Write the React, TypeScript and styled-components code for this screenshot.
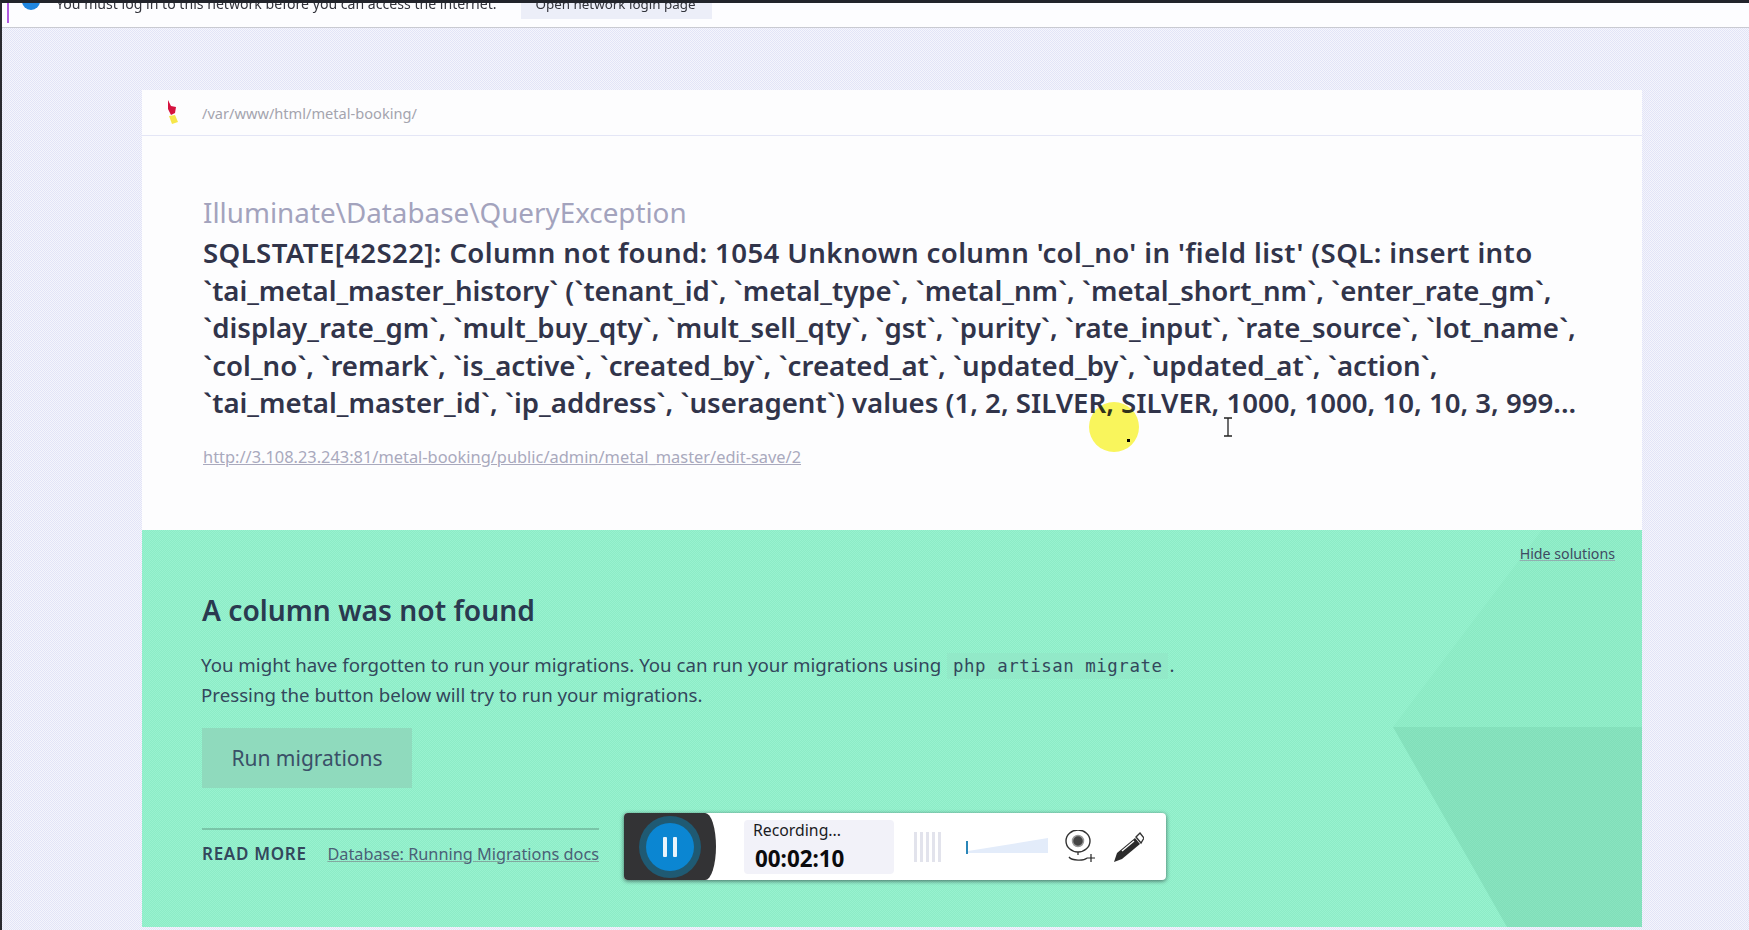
import React from "react";
import styled, { createGlobalStyle } from "styled-components";

const Global = createGlobalStyle`
  html, body { margin: 0; padding: 0; height: 100%; overflow: hidden; }
  body { font-family: "Noto Sans", "Open Sans", "Liberation Sans", sans-serif; }
  * { box-sizing: border-box; }
`;

const Page = styled.div`
  position: relative;
  width: 1749px;
  height: 930px;
  overflow: hidden;
  display: flex;
  flex-direction: column;
  border-top: 3px solid #22242b;
  border-left: 2px solid #2a2a30;
  background: repeating-conic-gradient(#e2e4f7 0 25%, #f5f5fc 0 50%) 0 0 / 2px 2px;
`;

const Notice = styled.div`
  height: 25px;
  flex: none;
  background: #fdfdff;
  border-bottom: 1px solid #c9cad2;
  overflow: hidden;
  position: relative;
  display: flex;
  align-items: flex-start;
  padding-left: 5px;
`;

const NoticeMark = styled.span`
  width: 2px;
  height: 20px;
  background: #b25be0;
  flex: none;
`;

const NoticeDot = styled.span`
  width: 18px;
  height: 18px;
  margin: -11px 0 0 13px;
  border-radius: 50%;
  background: #1f86e0;
  flex: none;
`;

const NoticeText = styled.span`
  margin: -9px 0 0 16px;
  font-size: 14.1px;
  line-height: 20px;
  color: #33343c;
  white-space: nowrap;
`;

const NoticeButton = styled.span`
  margin: -9px 0 0 24px;
  padding: 0 16px 4px 15px;
  height: 25px;
  line-height: 20px;
  font-size: 13.4px;
  color: #33343c;
  background: #eceef8;
  white-space: nowrap;
`;

const Card = styled.main`
  width: 1500px;
  height: 837px;
  flex: none;
  margin: 62px 0 0 140px;
  display: flex;
  flex-direction: column;
  background: #fdfdfe;
`;

const CardHeader = styled.header`
  height: 46px;
  flex: none;
  display: flex;
  align-items: center;
  gap: 21px;
  padding: 1px 0 0 21px;
  border-bottom: 1px solid #e4e6f6;
`;

const Logo = styled.svg`
  width: 18px;
  height: 28px;
  flex: none;
`;

const PathText = styled.span`
  font-size: 14.6px;
  color: #a4a4ae;
`;

const ErrorBlock = styled.section`
  height: 394px;
  flex: none;
  padding: 54px 30px 0 61px;
`;

const ExceptionClass = styled.div`
  font-size: 27.8px;
  line-height: 44px;
  color: #a3a3bd;
`;

const ExceptionMessage = styled.h1`
  margin: 0;
  font-size: 27.6px;
  line-height: 37.6px;
  font-weight: 600;
  color: #31344a;
  white-space: nowrap;
`;

const MessageLine = styled.span<{ $tracking?: number }>`
  display: block;
  letter-spacing: ${(p) => p.$tracking ?? 0}px;
`;

const UrlLink = styled.a`
  display: inline-block;
  margin-top: 25px;
  font-size: 16.4px;
  line-height: 20px;
  color: #a9a9bd;
  text-decoration: underline;
`;

const Solution = styled.section`
  position: relative;
  flex: 1;
  padding: 62px 0 0 59px;
  background: repeating-conic-gradient(#8cecc6 0 25%, #99f2d0 0 50%) 0 0 / 2px 2px;
  overflow: hidden;
`;

const Shape = styled.svg`
  position: absolute;
  inset: 0;
  width: 100%;
  height: 100%;
`;

const SolutionContent = styled.div`
  position: relative;
`;

const HideLink = styled.a`
  position: absolute;
  top: 14px;
  right: 27px;
  font-size: 14.2px;
  line-height: 20px;
  color: #3f4a62;
  text-decoration: underline;
  text-decoration-color: #8fb0b0;
`;

const SolutionTitle = styled.h2`
  margin: 0 0 0 1px;
  font-size: 28.2px;
  line-height: 36px;
  font-weight: 600;
  color: #2a3a50;
`;

const SolutionText = styled.p`
  margin: 22px 0 0;
  font-size: 18.7px;
  line-height: 30px;
  color: #33475c;
  white-space: nowrap;
`;

const Code = styled.code`
  font-family: "DejaVu Sans Mono", "Liberation Mono", monospace;
  font-size: 17.4px;
  letter-spacing: 0.55px;
  line-height: 1;
  padding: 3px 6px;
  margin: 0 1px;
  background: #92e9c8;
  color: #33475c;
`;

const RunButton = styled.button`
  display: block;
  width: 210px;
  height: 60px;
  margin: 18px 0 0 1px;
  border: 0;
  background: #8fdabd;
  color: #3a5068;
  font-family: inherit;
  font-size: 21px;
`;

const ReadMore = styled.div`
  width: 397px;
  height: 50px;
  margin: 40px 0 0 1px;
  padding-bottom: 1px;
  display: flex;
  justify-content: space-between;
  align-items: center;
  border-top: 2px solid #79c5a8;
`;

const ReadLabel = styled.span`
  font-size: 17px;
  font-weight: 600;
  letter-spacing: 0.7px;
  color: #33475c;
`;

const DocsLink = styled.a`
  font-size: 16.3px;
  color: #4a6076;
  text-decoration: underline;
  text-decoration-color: #82a9a0;
  white-space: nowrap;
`;

const Recorder = styled.div`
  position: absolute;
  left: 622px;
  top: 810px;
  width: 542px;
  height: 67px;
  display: flex;
  align-items: center;
  background: #fff;
  border-radius: 4px;
  box-shadow: 0 1px 4px rgba(40, 60, 60, 0.75);
  overflow: hidden;
`;

const PausePanel = styled.div`
  width: 92px;
  height: 100%;
  flex: none;
  background: #333335;
  border-radius: 0 11px 11px 0 / 0 34px 34px 0;
  display: flex;
  align-items: center;
  justify-content: center;
`;

const PauseRing = styled.div`
  width: 48px;
  height: 48px;
  border-radius: 50%;
  background: #0b86d2;
  box-shadow: 0 0 0 7px #1f5a73;
  display: flex;
  align-items: center;
  justify-content: center;
  gap: 6px;
`;

const PauseBar = styled.span`
  width: 4px;
  height: 20px;
  border-radius: 1px;
  background: #e8f4fb;
`;

const Timer = styled.div`
  width: 150px;
  height: 54px;
  margin-left: 28px;
  padding: 0 0 0 9px;
  border-radius: 4px;
  flex: none;
  background: #f2f2f9;
`;

const TimerLabel = styled.div`
  font-size: 15.8px;
  line-height: 20px;
  color: #1b1b1f;
`;

const TimerValue = styled.div`
  margin-top: 6px;
  padding-left: 2px;
  font-size: 22.4px;
  line-height: 26px;
  font-weight: 700;
  color: #0b0b0d;
`;

const Meter = styled.svg`
  width: 28px;
  height: 30px;
  margin-left: 19px;
  flex: none;
`;

const Volume = styled.svg`
  width: 82px;
  height: 24px;
  margin-left: 25px;
  flex: none;
`;

const CameraIcon = styled.svg`
  width: 31px;
  height: 33px;
  margin-left: 16px;
  flex: none;
`;

const PencilIcon = styled.svg`
  width: 30px;
  height: 30px;
  margin-left: 19px;
  flex: none;
`;

const Spot = styled.div`
  position: absolute;
  left: 1087px;
  top: 399px;
  width: 50px;
  height: 50px;
  border-radius: 50%;
  background: #fbf75c;
  mix-blend-mode: multiply;
`;

const SpotDot = styled.span`
  position: absolute;
  left: 38px;
  top: 37px;
  width: 3px;
  height: 3px;
  background: #000;
`;

const IBeam = styled.svg`
  position: absolute;
  left: 1221px;
  top: 414px;
  width: 10px;
  height: 20px;
`;

export default function App() {
  return (
    <Page>
      <Global />
      <Notice>
        <NoticeMark />
        <NoticeDot />
        <NoticeText>You must log in to this network before you can access the internet.</NoticeText>
        <NoticeButton>Open network login page</NoticeButton>
      </Notice>
      <Card>
        <CardHeader>
          <Logo viewBox="0 0 18 28">
            <path d="M5 1 L8 7 L13 8 L12 14 L8 16 L5 10 Z" fill="#d5123f" />
            <path d="M6 17 L12 16 L15 23 L9 25 Z" fill="#f6e64a" />
          </Logo>
          <PathText>/var/www/html/metal-booking/</PathText>
        </CardHeader>
        <ErrorBlock>
          <ExceptionClass>Illuminate\Database\QueryException</ExceptionClass>
          <ExceptionMessage>
            <MessageLine $tracking={0.38}>SQLSTATE[42S22]: Column not found: 1054 Unknown column 'col_no' in 'field list' (SQL: insert into</MessageLine>
            <MessageLine $tracking={-0.04}>`tai_metal_master_history` (`tenant_id`, `metal_type`, `metal_nm`, `metal_short_nm`, `enter_rate_gm`,</MessageLine>
            <MessageLine>`display_rate_gm`, `mult_buy_qty`, `mult_sell_qty`, `gst`, `purity`, `rate_input`, `rate_source`, `lot_name`,</MessageLine>
            <MessageLine>`col_no`, `remark`, `is_active`, `created_by`, `created_at`, `updated_by`, `updated_at`, `action`,</MessageLine>
            <MessageLine>`tai_metal_master_id`, `ip_address`, `useragent`) values (1, 2, SILVER, SILVER, 1000, 1000, 10, 10, 3, 999...</MessageLine>
          </ExceptionMessage>
          <UrlLink>http://3.108.23.243:81/metal-booking/public/admin/metal_master/edit-save/2</UrlLink>
        </ErrorBlock>
        <Solution>
          <Shape viewBox="0 0 1500 397" preserveAspectRatio="none">
            <polygon points="1251,197 1400,0 1500,0 1500,197" fill="#6fd0a8" fillOpacity="0.1" />
            <polygon points="1251,197 1365,397 1500,397 1500,197" fill="#5fbd98" fillOpacity="0.27" />
          </Shape>
          <HideLink>Hide solutions</HideLink>
          <SolutionContent>
            <SolutionTitle>A column was not found</SolutionTitle>
            <SolutionText>
              You might have forgotten to run your migrations. You can run your migrations using <Code>php artisan migrate</Code>.
              <br />
              Pressing the button below will try to run your migrations.
            </SolutionText>
            <RunButton>Run migrations</RunButton>
            <ReadMore>
              <ReadLabel>READ MORE</ReadLabel>
              <DocsLink>Database: Running Migrations docs</DocsLink>
            </ReadMore>
          </SolutionContent>
        </Solution>
      </Card>
      <Recorder>
        <PausePanel>
          <PauseRing>
            <PauseBar />
            <PauseBar />
          </PauseRing>
        </PausePanel>
        <Timer>
          <TimerLabel>Recording...</TimerLabel>
          <TimerValue>00:02:10</TimerValue>
        </Timer>
        <Meter viewBox="0 0 28 30">
          <path d="M1 0h3v30H1zM7 0h3v30H7zM13 0h3v30h-3zM19 0h3v30h-3zM25 0h3v30h-3z" fill="#e2e3ec" />
        </Meter>
        <Volume viewBox="0 0 82 24">
          <polygon points="2,16 82,3 82,18 2,18" fill="#e3ecfa" />
          <rect x="0" y="6" width="2" height="13" fill="#2a86b8" />
        </Volume>
        <CameraIcon viewBox="0 0 31 33">
          <ellipse cx="14" cy="11" rx="12" ry="11" fill="#fff" stroke="#333" strokeWidth="1.4" />
          <circle cx="14" cy="11" r="5.5" fill="#444" stroke="#999" strokeWidth="1.5" />
          <path d="M14 22v3M5 27c3 4 15 4 18 1" fill="none" stroke="#333" strokeWidth="1.3" />
          <path d="M27 24v8M23 28h8" stroke="#222" strokeWidth="1.2" />
        </CameraIcon>
        <PencilIcon viewBox="0 0 30 30">
          <path d="M3 21 L21 6 L26 12 L8 27 L0 30 Z" fill="#2c2c2c" />
          <path d="M22 5 L26 1 L30 6 L27 11 Z" fill="#fff" stroke="#333" strokeWidth="1.4" />
          <path d="M8 19 L20 9" stroke="#fff" strokeWidth="1.3" />
        </PencilIcon>
      </Recorder>
      <Spot>
        <SpotDot />
      </Spot>
      <IBeam viewBox="0 0 10 20">
        <path d="M1 1h8M5 1v18M1 19h8" fill="none" stroke="#222" strokeWidth="1.3" />
      </IBeam>
    </Page>
  );
}
